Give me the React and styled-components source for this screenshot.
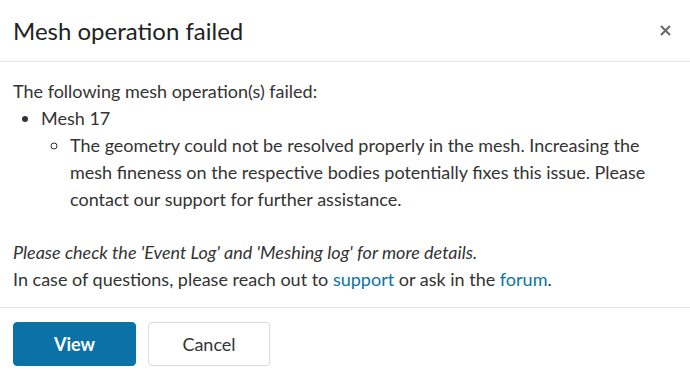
import React from "react";
import styled, { createGlobalStyle } from "styled-components";

const GlobalStyle = createGlobalStyle`
  body {
    margin: 0;
    background: #fff;
    font-family: Lato, "Liberation Sans", sans-serif;
    color: #333;
  }
`;

const Dialog = styled.div`
  width: 690px;
  box-sizing: border-box;
  display: flex;
  flex-direction: column;
  background: #fff;
`;

const Header = styled.div`
  height: 62px;
  flex-shrink: 0;
  box-sizing: border-box;
  display: flex;
  align-items: center;
  justify-content: space-between;
  padding: 0 13px;
  border-bottom: 1px solid #e6e6e6;
`;

const Title = styled.h2`
  margin: 0;
  font-size: 24px;
  font-weight: 400;
  color: #222;
  padding-bottom: 1px;
`;

const CloseButton = styled.button`
  border: 0;
  background: none;
  padding: 0;
  margin-right: 5px;
  width: 14px;
  height: 14px;
  display: flex;
  align-items: center;
  justify-content: center;
  cursor: pointer;
`;

const Body = styled.div`
  padding: 16px 13px 14px 13px;
  font-size: 18px;
  line-height: 27px;
  border-bottom: 1px solid #e6e6e6;
`;

const Paragraph = styled.p`
  margin: 0;
  font-style: ${(p) => (p.$italic ? "italic" : "normal")};
`;

const List = styled.ul`
  margin: 0;
  padding-left: ${(p) => (p.$nested ? "29px" : "28px")};
  list-style-type: ${(p) => (p.$nested ? "circle" : "disc")};
`;

const Notes = styled.div`
  margin-top: 26px;
`;

const Link = styled.a`
  color: #0a74a8;
  text-decoration: none;
`;

const Footer = styled.div`
  display: flex;
  gap: 12px;
  padding: 14px 13px;
`;

const Button = styled.button`
  width: ${(p) => (p.$primary ? "123px" : "122px")};
  height: 44px;
  border-radius: 4px;
  font-family: Lato, "Liberation Sans", sans-serif;
  font-size: 18px;
  font-weight: ${(p) => (p.$primary ? 700 : 400)};
  color: ${(p) => (p.$primary ? "#fff" : "#333")};
  background: ${(p) => (p.$primary ? "#0a72a6" : "#fff")};
  border: 1px solid ${(p) => (p.$primary ? "#0a72a6" : "#ddd")};
  cursor: pointer;
`;

export default function App() {
  return (
    <>
      <GlobalStyle />
      <Dialog>
        <Header>
          <Title>Mesh operation failed</Title>
          <CloseButton aria-label="Close">
            <svg width="11" height="11" viewBox="0 0 11 11">
              <path d="M1 1L10 10M10 1L1 10" stroke="#666" strokeWidth="2" />
            </svg>
          </CloseButton>
        </Header>
        <Body>
          <Paragraph>The following mesh operation(s) failed:</Paragraph>
          <List>
            <li>
              Mesh 17
              <List $nested>
                <li>
                  The geometry could not be resolved properly in the mesh.
                  Increasing the mesh fineness on the respective bodies
                  potentially fixes this issue. Please contact our support for
                  further assistance.
                </li>
              </List>
            </li>
          </List>
          <Notes>
            <Paragraph $italic>
              Please check the 'Event Log' and 'Meshing log' for more details.
            </Paragraph>
            <Paragraph>
              In case of questions, please reach out to{" "}
              <Link href="#">support</Link> or ask in the{" "}
              <Link href="#">forum</Link>.
            </Paragraph>
          </Notes>
        </Body>
        <Footer>
          <Button $primary>View</Button>
          <Button>Cancel</Button>
        </Footer>
      </Dialog>
    </>
  );
}
